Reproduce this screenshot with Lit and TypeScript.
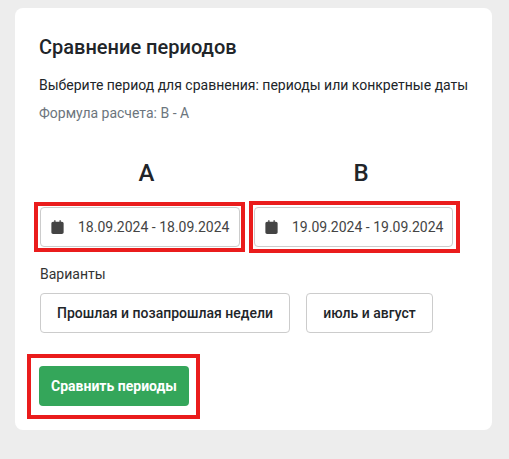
import { LitElement, html, css } from "lit";
import { customElement } from "lit/decorators.js";

const cal = html`<svg class="ico" viewBox="0 0 448 512" width="13" height="14" aria-hidden="true"><path fill="currentColor" d="M152 24c0-13.300-10.700-24-24-24S104 10.700 104 24V64H64C28.700 64 0 92.700 0 128v16 48V448c0 35.300 28.700 64 64 64H384c35.300 0 64-28.700 64-64V192 144 128c0-35.300-28.700-64-64-64H344V24c0-13.300-10.700-24-24-24s-24 10.700-24 24V64H152V24zM0 192H448V176H0z"/></svg>`;

@customElement("app-root")
export class AppRoot extends LitElement {
  static styles = css`
    :host { display: block; height: 459px; background: #ededed; font-family: Roboto, "Liberation Sans", sans-serif; color: #212529; padding: 8px 17px 0 15px; box-sizing: border-box; overflow: hidden; }
    .card { background: #fff; border-radius: 8px; height: 422px; box-sizing: border-box; padding: 26px 24px 0; }
    h2 { margin: 0; font-size: 20px; font-weight: 500; line-height: 26px; color: #212529; }
    .lead { margin: 15px 0 0; font-size: 14px; line-height: 20px; white-space: nowrap; }
    .formula { margin: 8px 0 0; font-size: 14px; line-height: 20px; color: #6c757d; }
    .cols { display: grid; grid-template-columns: 214px 214px; margin: 36px 0 0 1px; }
    .letter { font-size: 24px; font-weight: 500; line-height: 28px; height: 28px; text-align: center; }
    .a .letter { padding-right: 1px; }
    .picker { position: relative; margin-top: 20px; width: 200px; height: 40px; box-sizing: border-box; border: 1px solid #ccc; border-radius: 4px; display: flex; align-items: center; padding-left: 10px; font-size: 14px; color: #444; }
    .picker::after { content: ""; position: absolute; inset: -6px -6px -6px -7px; border: 4px solid #ea1c1c; pointer-events: none; }
    .b .picker { width: 199px; }
    .b .picker::after { inset: -7px -8px -7px -6px; }
    .ico { color: #444; margin-right: 14px; flex: none; }
    .label { margin: 17px 0 0 1px; font-size: 14px; line-height: 20px; color: #333; }
    .opts { display: flex; gap: 16px; margin: 9px 0 0 1px; }
    .opt { height: 40px; box-sizing: border-box; border: 1px solid #ccc; border-radius: 4px; background: #fff; font: 500 14px Roboto, "Liberation Sans", sans-serif; color: #212529; padding: 0 16px; white-space: nowrap; }
    .first { width: 250px; }
    .second { width: 127px; }
    .go-wrap { display: inline-block; position: relative; margin-top: 33px; }
    .go { display: block; width: 150px; height: 40px; border: 0; border-radius: 4px; background: #34a65a; color: #fff; font: 700 14px Roboto, "Liberation Sans", sans-serif; padding: 0; }
    .go-wrap::after { content: ""; position: absolute; inset: -12px -11px -13px -12px; border: 4px solid #ea1c1c; pointer-events: none; }
  `;

  render() {
    return html`<div class="card">
      <h2>Сравнение периодов</h2>
      <p class="lead">Выберите период для сравнения: периоды или конкретные даты</p>
      <p class="formula">Формула расчета: B - A</p>
      <div class="cols">
        <div class="a"><div class="letter">A</div><div class="picker">${cal}18.09.2024 - 18.09.2024</div></div>
        <div class="b"><div class="letter">B</div><div class="picker">${cal}19.09.2024 - 19.09.2024</div></div>
      </div>
      <div class="label">Варианты</div>
      <div class="opts"><button class="opt first">Прошлая и позапрошлая недели</button><button class="opt second">июль и август</button></div>
      <div class="go-wrap"><button class="go">Сравнить периоды</button></div>
    </div>`;
  }
}
